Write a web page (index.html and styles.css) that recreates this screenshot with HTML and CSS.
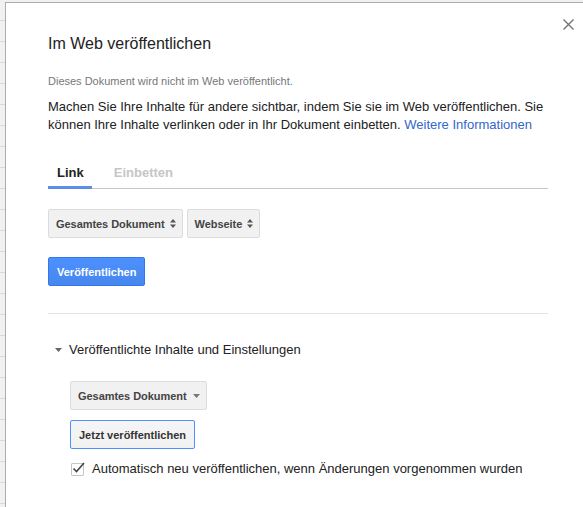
FILE: index.html
```html
<!DOCTYPE html>
<html lang="de">
<head>
<meta charset="utf-8">
<title>Im Web veröffentlichen</title>
<link rel="stylesheet" href="styles.css">
</head>
<body>
<div class="dialog">
  <button class="close" aria-label="Schließen">
    <svg width="11" height="11" viewBox="0 0 11 11"><path d="M0.5 0.5L10.5 10.5M10.5 0.5L0.5 10.5" stroke="#737373" stroke-width="1.4" fill="none"/></svg>
  </button>
  <h1 class="title">Im Web veröffentlichen</h1>
  <p class="status">Dieses Dokument wird nicht im Web veröffentlicht.</p>
  <p class="intro">Machen Sie Ihre Inhalte für andere sichtbar, indem Sie sie im Web veröffentlichen. Sie können Ihre Inhalte verlinken oder in Ihr Dokument einbetten. <a href="#" class="link">Weitere Informationen</a></p>
  <div class="tabs">
    <div class="tab active">Link</div>
    <div class="tab">Einbetten</div>
  </div>
  <div class="selects">
    <div class="select">Gesamtes Dokument <svg class="updown" width="6" height="9" viewBox="0 0 6 9"><path d="M0 3.5L3 0L6 3.5Z M0 5.5L3 9L6 5.5Z" fill="#555"/></svg></div>
    <div class="select">Webseite <svg class="updown" width="6" height="9" viewBox="0 0 6 9"><path d="M0 3.5L3 0L6 3.5Z M0 5.5L3 9L6 5.5Z" fill="#555"/></svg></div>
  </div>
  <div class="row">
    <button class="btn primary">Veröffentlichen</button>
  </div>
  <hr class="sep">
  <div class="section-head">
    <svg class="tri" width="7" height="4" viewBox="0 0 7 4"><path d="M0 0L7 0L3.5 4Z" fill="#666"/></svg>
    <span>Veröffentlichte Inhalte und Einstellungen</span>
  </div>
  <div class="section-body">
    <div class="row">
      <div class="select menu">Gesamtes Dokument <svg class="down" width="7" height="4" viewBox="0 0 7 4"><path d="M0 0L7 0L3.5 4Z" fill="#777"/></svg></div>
    </div>
    <div class="row">
      <button class="btn focused">Jetzt veröffentlichen</button>
    </div>
    <label class="check">
      <span class="box"><svg width="16" height="14" viewBox="0 0 16 14"><path d="M2.5 7.5L5.5 10.5L13 2" stroke="#444" stroke-width="1.6" fill="none"/></svg></span>
      <span>Automatisch neu veröffentlichen, wenn Änderungen vorgenommen wurden</span>
    </label>
  </div>
</div>
</body>
</html>
```
FILE: styles.css
```css
html, body {
  margin: 0;
  padding: 0;
  overflow: hidden;
  height: 100%;
}
body {
  background-color: #f1f1f1;
  background-image: repeating-linear-gradient(to bottom, transparent 0, transparent 20px, #d9d9d9 20px, #d9d9d9 21px);
  font-family: "Liberation Sans", Arial, sans-serif;
  color: #222;
}
.dialog {
  position: relative;
  margin: 2px 0 0 5px;
  width: 500px;
  height: 474px;
  padding: 31px 42px 0 42px;
  background: #fff;
  border: 1px solid #acacac;
  border-right: none;
  border-bottom: none;
}
.close {
  position: absolute;
  left: 557px;
  top: 16px;
  padding: 0;
  border: 0;
  background: none;
  width: 11px;
  height: 11px;
  display: flex;
}
.title {
  margin: 0;
  font-size: 16px;
  font-weight: normal;
  line-height: 20px;
  color: #222;
}
.status {
  margin: 20px 0 0;
  font-size: 11px;
  line-height: 14px;
  color: #777;
}
.intro {
  margin: 10px 0 0;
  font-size: 13px;
  line-height: 18px;
  color: #222;
}
.link {
  color: #3367c9;
  text-decoration: none;
}
.tabs {
  display: flex;
  margin-top: 30px;
  border-bottom: 1px solid #c6c6c6;
}
.tab {
  font-size: 13px;
  font-weight: bold;
  line-height: 18px;
  padding: 0 8px 4px 9px;
  margin-bottom: -1px;
  border-bottom: 3px solid transparent;
  color: #c6c6c6;
}
.tab + .tab {
  margin-left: 13px;
}
.tab.active {
  color: #222;
  border-bottom-color: #5c8fe8;
}
.selects {
  display: flex;
  gap: 4px;
  margin-top: 20px;
}
.select {
  display: inline-flex;
  align-items: center;
  gap: 5px;
  height: 27px;
  padding: 0 6px 0 7px;
  background: #f1f1f1;
  border: 1px solid #dcdcdc;
  border-radius: 2px;
  font-size: 11px;
  font-weight: bold;
  color: #444;
  letter-spacing: -0.05px;
}
.row {
  display: flex;
}
.selects + .row {
  margin-top: 19px;
}
.btn {
  height: 29px;
  padding: 0 8px;
  border-radius: 2px;
  font-family: "Liberation Sans", Arial, sans-serif;
  font-size: 11px;
  font-weight: bold;
  cursor: default;
}
.btn.primary {
  color: #fff;
  background: linear-gradient(to bottom, #4d90fe, #4787ed);
  border: 1px solid #3079ed;
}
.btn.focused {
  color: #333;
  background: linear-gradient(to bottom, #f5f5f5, #f1f1f1);
  border: 1px solid #4d90fe;
}
.sep {
  margin: 27px 0 0;
  border: 0;
  border-top: 1px solid #e5e5e5;
  height: 0;
}
.section-head {
  display: flex;
  align-items: center;
  margin-top: 27px;
  padding-left: 7px;
  gap: 7px;
  font-size: 13px;
  line-height: 18px;
  color: #222;
}
.section-body {
  padding-left: 22px;
  margin-top: 22px;
}
.select.menu {
  gap: 6px;
}
.section-body .row + .row {
  margin-top: 10px;
}
.check {
  display: flex;
  align-items: center;
  gap: 8px;
  margin-top: 11px;
  padding-left: 1px;
  font-size: 13px;
  line-height: 18px;
  color: #222;
}
.box {
  position: relative;
  width: 11px;
  height: 11px;
  border: 1px solid #c6c6c6;
  border-radius: 1px;
  background: #fff;
  flex: none;
}
.box svg {
  position: absolute;
  left: -1px;
  top: -3px;
}
```
